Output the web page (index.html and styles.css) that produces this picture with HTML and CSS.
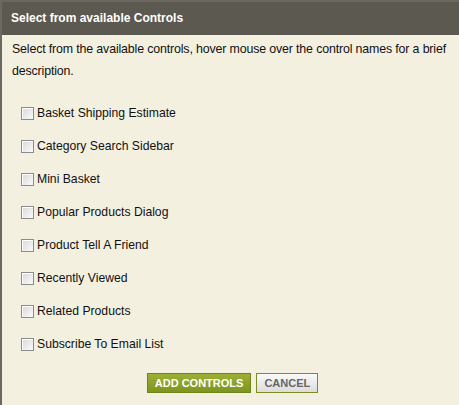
FILE: index.html
```html
<!DOCTYPE html>
<html>
<head>
<meta charset="utf-8">
<link rel="stylesheet" href="styles.css">
</head>
<body>
<div class="dialog">
  <div class="header">Select from available Controls</div>
  <div class="content">
    <p class="intro">Select from the available controls, hover mouse over the control names for a brief description.</p>
    <ul class="list">
      <li><label><input type="checkbox"><span>Basket Shipping Estimate</span></label></li>
      <li><label><input type="checkbox"><span>Category Search Sidebar</span></label></li>
      <li><label><input type="checkbox"><span>Mini Basket</span></label></li>
      <li><label><input type="checkbox"><span>Popular Products Dialog</span></label></li>
      <li><label><input type="checkbox"><span>Product Tell A Friend</span></label></li>
      <li><label><input type="checkbox"><span>Recently Viewed</span></label></li>
      <li><label><input type="checkbox"><span>Related Products</span></label></li>
      <li><label><input type="checkbox"><span>Subscribe To Email List</span></label></li>
    </ul>
    <div class="actions">
      <button class="btn btn-add">ADD CONTROLS</button>
      <button class="btn btn-cancel">CANCEL</button>
    </div>
  </div>
</div>
</body>
</html>
```
FILE: styles.css
```css
html, body {
  margin: 0;
  padding: 0;
  background: #f4f0e0;
}
body {
  font-family: "Liberation Sans", Arial, sans-serif;
  font-size: 12px;
  color: #111;
}
.dialog {
  width: 459px;
  height: 405px;
  box-sizing: border-box;
  border-left: 2px solid #6b6861;
  border-top: 2px solid #6b6861;
  background: #f4f0e0;
  display: flex;
  flex-direction: column;
}
.header {
  background: #5c5951;
  color: #fff;
  font-weight: bold;
  font-size: 12px;
  height: 33px;
  line-height: 32px;
  padding-left: 9px;
}
.content {
  padding: 0 10px;
}
.intro {
  margin: 3px 0 0;
  line-height: 22px;
  font-size: 12.4px;
  letter-spacing: -0.15px;
}
.list {
  list-style: none;
  margin: 24px 0 0;
  padding: 0 0 0 9px;
}
.list li {
  height: 33px;
}
.list label {
  display: flex;
  align-items: center;
  height: 14px;
  font-size: 12.2px;
}
.list input {
  appearance: none;
  -webkit-appearance: none;
  width: 13px;
  height: 13px;
  margin: 0 3px 0 0;
  border: 1px solid #8c8c8c;
  box-sizing: border-box;
  background: linear-gradient(135deg, #d8d8d8, #fbfbfb);
  box-shadow: inset 1px 1px 0 #fff;
}
.actions {
  display: flex;
  justify-content: center;
  gap: 5px;
  margin-top: 3px;
  padding-left: 4px;
}
.btn {
  font-family: "Liberation Sans", Arial, sans-serif;
  font-weight: bold;
  font-size: 11px;
  height: 20px;
  padding: 0 7px;
  cursor: pointer;
}
.btn-add {
  color: #fff;
  background: linear-gradient(#9cb034, #7e9420);
  border: 1px solid #6f8418;
}
.btn-cancel {
  color: #666;
  background: linear-gradient(#fafafa, #dcdcdc);
  border: 1px solid #7d8c1c;
}
```
